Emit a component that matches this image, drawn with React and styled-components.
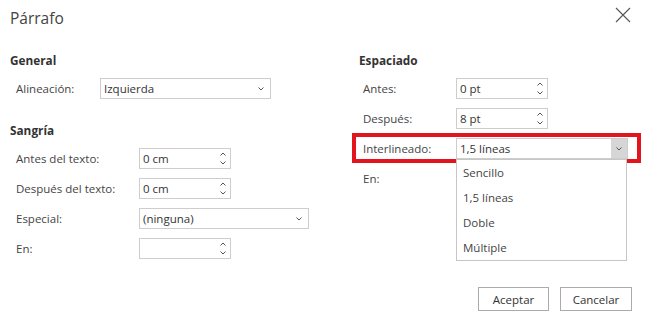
import React from "react";
import styled, { createGlobalStyle } from "styled-components";

const Global = createGlobalStyle`
  html, body { margin: 0; padding: 0; background: #fff; }
  body { font-family: "Open Sans", "Noto Sans", sans-serif; color: #333; }
  * { box-sizing: border-box; }
`;

const Dialog = styled.div`
  width: 645px;
  height: 323px;
  background: #fff;
  display: flex;
  flex-direction: column;
`;

const Header = styled.div`
  display: flex;
  justify-content: space-between;
  align-items: flex-start;
  height: 36px;
  padding: 0 14px 0 10px;
`;

const Title = styled.h1`
  margin: 0;
  padding-top: 8px;
  font-size: 15.5px;
  line-height: 20px;
  font-weight: 400;
  color: #444;
`;

const CloseButton = styled.button`
  margin-top: 7px;
  width: 16px;
  height: 16px;
  padding: 0;
  border: none;
  background: none;
  display: flex;
  color: #555;
`;

const Body = styled.div`
  display: grid;
  grid-template-columns: 349px 1fr;
  padding-left: 10px;
`;

const Column = styled.div`
  display: flex;
  flex-direction: column;
`;

const SectionTitle = styled.h2`
  margin: ${(p) => p.$top}px 0 10px 0;
  font-size: 11.8px;
  line-height: 16px;
  font-weight: 700;
  color: #333;
`;

const Rows = styled.div`
  display: flex;
  flex-direction: column;
  align-items: flex-start;
  gap: 9px;
  padding-left: ${(p) => p.$indent}px;
`;

const Row = styled.div`
  position: relative;
  display: flex;
  align-items: center;
  height: 21px;
  ${(p) =>
    p.$highlight &&
    `
    &::after {
      content: "";
      position: absolute;
      top: -5px;
      bottom: -4px;
      left: -11px;
      right: -13px;
      border: 4px solid #e2141d;
      pointer-events: none;
    }
  `}
`;

const Label = styled.label`
  width: ${(p) => p.$w}px;
  flex: none;
  font-size: 11.5px;
  color: #444;
  white-space: nowrap;
`;

const Box = styled.div`
  position: relative;
  width: ${(p) => p.$w}px;
  height: 21px;
  border: 1px solid #cdcdcd;
  background: #fff;
  display: flex;
  align-items: center;
  padding-left: 3px;
  font-size: 11.5px;
  color: #333;
`;

const BoxText = styled.span`
  flex: 1;
  white-space: nowrap;
`;

const SpinArrows = styled.span`
  width: 14px;
  height: 19px;
  display: flex;
  flex-direction: column;
  justify-content: center;
  align-items: center;
  gap: 5px;
  color: #555;
`;

const DropButton = styled.span`
  width: 16px;
  align-self: stretch;
  display: flex;
  align-items: center;
  justify-content: center;
  background: ${(p) => (p.$active ? "#d6d6d6" : "transparent")};
  margin-right: ${(p) => (p.$active ? 0 : 1)}px;
  color: #555;
`;

const List = styled.ul`
  position: absolute;
  top: 20px;
  left: -1px;
  width: 171px;
  margin: 0;
  padding: 0;
  list-style: none;
  background: #fff;
  border: 1px solid #c6c6c6;
  z-index: 2;
`;

const Item = styled.li`
  height: 25px;
  line-height: 25px;
  padding-left: 6px;
  font-size: 11.5px;
  color: #444;
`;

const Footer = styled.div`
  margin-top: auto;
  display: flex;
  justify-content: flex-end;
  gap: 11px;
  padding: 0 13px 12px 0;
`;

const Button = styled.button`
  width: ${(p) => p.$w}px;
  height: 24px;
  border: 1px solid #ababab;
  background: #fff;
  font-family: inherit;
  font-size: 11.5px;
  color: #333;
  padding: 0;
`;

const Up = () => (
  <svg width="6" height="4" viewBox="0 0 6 4">
    <path d="M0.5 3.5 L3 1 L5.5 3.5" fill="none" stroke="currentColor" strokeWidth="1" />
  </svg>
);
const Down = () => (
  <svg width="6" height="4" viewBox="0 0 6 4">
    <path d="M0.5 0.5 L3 3 L5.5 0.5" fill="none" stroke="currentColor" strokeWidth="1" />
  </svg>
);

const Spinner = ({ w = 92, value }) => (
  <Box $w={w}>
    <BoxText>{value}</BoxText>
    <SpinArrows>
      <Up />
      <Down />
    </SpinArrows>
  </Box>
);

const Select = ({ w, value, active, children }) => (
  <Box $w={w}>
    <BoxText>{value}</BoxText>
    <DropButton $active={active}>
      <Down />
    </DropButton>
    {children}
  </Box>
);

export default function App() {
  return (
    <>
      <Global />
      <Dialog>
        <Header>
          <Title>Párrafo</Title>
          <CloseButton aria-label="Cerrar">
            <svg width="16" height="16" viewBox="0 0 16 16">
              <path d="M1 1 L15 15 M15 1 L1 15" stroke="currentColor" strokeWidth="1.1" fill="none" />
            </svg>
          </CloseButton>
        </Header>
        <Body>
          <Column>
            <SectionTitle $top={16}>General</SectionTitle>
            <Rows $indent={6}>
              <Row>
                <Label $w={84}>Alineación:</Label>
                <Select w={171} value="Izquierda" />
              </Row>
            </Rows>
            <SectionTitle $top={23}>Sangría</SectionTitle>
            <Rows $indent={6}>
              <Row>
                <Label $w={123}>Antes del texto:</Label>
                <Spinner value="0 cm" />
              </Row>
              <Row>
                <Label $w={123}>Después del texto:</Label>
                <Spinner value="0 cm" />
              </Row>
              <Row>
                <Label $w={123}>Especial:</Label>
                <Select w={170} value="(ninguna)" />
              </Row>
              <Row>
                <Label $w={123}>En:</Label>
                <Spinner value="" />
              </Row>
            </Rows>
          </Column>
          <Column>
            <SectionTitle $top={16}>Espaciado</SectionTitle>
            <Rows $indent={4}>
              <Row>
                <Label $w={93}>Antes:</Label>
                <Spinner value="0 pt" />
              </Row>
              <Row>
                <Label $w={93}>Después:</Label>
                <Spinner value="8 pt" />
              </Row>
              <Row $highlight>
                <Label $w={93}>Interlineado:</Label>
                <Select w={172} value="1,5 líneas" active>
                  <List>
                    <Item>Sencillo</Item>
                    <Item>1,5 líneas</Item>
                    <Item>Doble</Item>
                    <Item>Múltiple</Item>
                  </List>
                </Select>
              </Row>
              <Row>
                <Label $w={93}>En:</Label>
                <Spinner value="" />
              </Row>
            </Rows>
          </Column>
        </Body>
        <Footer>
          <Button $w={71}>Aceptar</Button>
          <Button $w={72}>Cancelar</Button>
        </Footer>
      </Dialog>
    </>
  );
}
